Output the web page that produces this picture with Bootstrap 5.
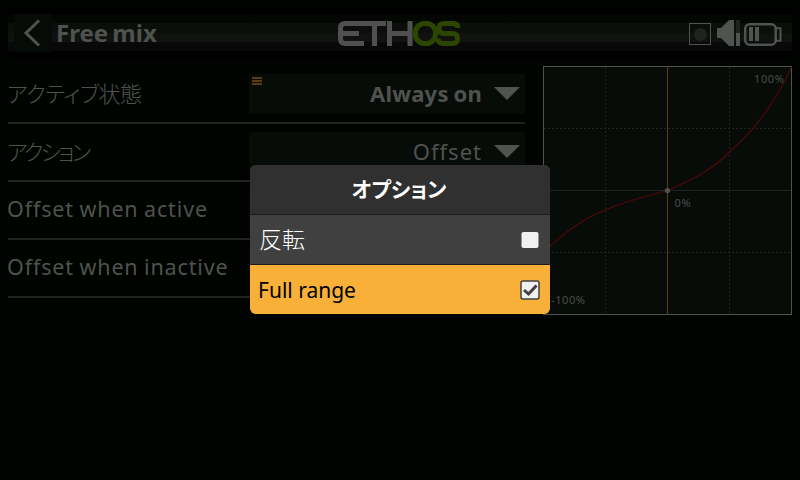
<!DOCTYPE html>
<html lang="ja">
<head>
<meta charset="utf-8">
<meta name="viewport" content="width=device-width, initial-scale=1">
<title>Free mix</title>
<link href="https://cdn.jsdelivr.net/npm/bootstrap@5.3.0/dist/css/bootstrap.min.css" rel="stylesheet">
<style>
body{width:800px;height:480px;background:#000300;color:#4f534f;font-family:"Noto Sans","Noto Sans CJK JP",sans-serif;font-size:21px;line-height:30px}
.topbar{height:50px;margin-top:8px;background:linear-gradient(#000,#000 7px,#040604 7px,#050705 15px,#0b0e0b 15px,#0b0e0b 25px,#101210 25px,#101210 34px,#080908 34px,#080808 43px,#000 43px)}
.back{width:38px;height:38px;margin-left:6px;background:#070b08}
.heading{font-size:24px;font-weight:700;margin-left:4px;width:282px;word-spacing:-2px}
.logo{margin-top:2px}
.status{margin-left:227px;margin-top:1px}
.form-area{width:517px}
.setting{height:58px;padding:8px 0;border-bottom:2px solid #202420}
.setting .caption{letter-spacing:.87px;word-spacing:-1px;font-size:21.5px;width:241px;margin-left:-1px;padding-bottom:2px}
.setting .jp{font-family:"Noto Sans CJK JP",sans-serif;font-weight:300;font-size:22px;letter-spacing:-.5px;word-spacing:0;font-feature-settings:"palt";padding-bottom:5px}
.setting .tight{letter-spacing:-2.8px}
.field{width:276px;height:40px;margin-left:auto;background:#080c09;letter-spacing:1px;padding:0 5px 2px 0}
.field .strong{font-weight:700;font-size:22px;letter-spacing:.2px;word-spacing:-1px}
.field .value{font-size:22px}
.mark3{left:3px;top:3px}
.chart{margin-left:18px}
.chart text{font-size:11px;letter-spacing:.6px;fill:#4a4e4a}
.options{left:250px;top:165px;width:300px;height:149px;border-radius:6px;background:#404040;color:#fff}
.options-title{height:50px;padding:0 2px 4px 0;background:#303030;border-bottom:1px solid #1c1c1c;font-family:"Noto Sans CJK JP",sans-serif;font-weight:700;font-size:21px;font-feature-settings:"palt"}
.option{height:50px;padding:0 10px 0 8px}
.option.plain{border-bottom:1px solid #1c1c1c;font-family:"Noto Sans CJK JP",sans-serif;font-weight:300;font-size:23px;padding-left:9px}
.plain span{padding-bottom:4px}
.option.chosen{height:49px;background:#f8b038;color:#000}
</style>
<script src="https://cdn.jsdelivr.net/npm/bootstrap@5.3.0/dist/js/bootstrap.bundle.min.js"></script>
</head>
<body class="overflow-hidden position-relative d-flex flex-column">
<header class="topbar mx-2 d-flex align-items-center flex-shrink-0">
  <div class="back"><svg class="d-block" width="38" height="38"><path d="M25 6.500L12 19L25 31.500" fill="none" stroke="#505450" stroke-width="3"/></svg></div>
  <div class="heading text-nowrap">Free mix</div>
  <svg class="logo" width="124" height="26" fill="none" stroke-width="5" aria-label="ETHOS">
    <g stroke="#505050"><path d="M48 2.500H7Q2.500 2.500 2.500 7V18Q2.500 22.500 7 22.500H26M2.500 12.500H21M36.500 2.500V25M51.500 0V25M72 0V25M51.500 12.500H72"/></g>
    <g stroke="#2c4600"><rect x="77.500" y="2.500" width="20" height="20" rx="9"/><path d="M120 7Q120 2.500 115 2.500H106Q101 2.500 101 7.500Q101 12.500 106 12.500H114.500Q119.500 12.500 119.500 17.500Q119.500 22.500 114.500 22.500H105Q100 22.500 100 17.500"/></g>
  </svg>
  <svg class="status" width="94" height="28">
    <rect x=".5" y="3.500" width="21" height="21" fill="none" stroke="#505450"/><circle cx="11.500" cy="14.500" r="6.500" fill="#202420"/>
    <path d="M28 8H32L40 0H45V26H40L32 18H28Z" fill="#505450"/>
    <path d="M47 0H51V13H47Z" fill="#202420"/><path d="M47 13H51V26H47Z" fill="#505450"/>
    <rect x="56.200" y="4.200" width="30.500" height="20.500" rx="4.500" fill="none" stroke="#505450" stroke-width="2.500"/><path d="M87 8.200H91.500V20.800H87" fill="none" stroke="#505450" stroke-width="2"/>
    <path d="M60 7H64V21H60ZM66 7H70V21H66Z" fill="#505450"/>
  </svg>
</header>
<main class="d-flex mx-2 pt-2">
  <section class="form-area flex-shrink-0">
    <div class="setting d-flex align-items-center"><div class="caption jp">アクティブ状態</div>
      <div class="field position-relative d-flex align-items-center justify-content-end">
        <svg class="mark3 position-absolute" width="10" height="8"><path d="M0 1H10M0 4H10M0 7H10" stroke="#5d3d10" stroke-width="2"/></svg>
        <span class="strong me-2">Always on</span><svg class="ms-1" width="26" height="13"><path d="M0 0H26L13 13Z" fill="#505450"/></svg></div></div>
    <div class="setting d-flex align-items-center"><div class="caption jp tight">アクション</div>
      <div class="field d-flex align-items-center justify-content-end"><span class="value me-2">Offset</span><svg class="ms-1" width="26" height="13"><path d="M0 0H26L13 13Z" fill="#505450"/></svg></div></div>
    <div class="setting d-flex align-items-center"><div class="caption text-nowrap">Offset when active</div><div class="field"></div></div>
    <div class="setting d-flex align-items-center"><div class="caption text-nowrap">Offset when inactive</div><div class="field"></div></div>
  </section>
  <svg class="chart flex-shrink-0" width="249" height="249">
    <rect x=".5" y=".5" width="248" height="248" fill="#080c09" stroke="#505450"/>
    <path d="M62.500 1V248M186.500 1V248M1 62.500H248M1 186.500H248" stroke="#202420" stroke-dasharray="2 2"/>
    <path d="M1 124.500H248" stroke="#202420"/><path d="M124.500 0V249" stroke="#5d3d10"/>
    <path d="M1 186C18 169 40 153 62.500 144C85 134 105 130 124.500 124.500C145 115 166 107 186.500 86C212 64 233 35 248.500 1" fill="none" stroke="#500808" stroke-width="1.200"/>
    <circle cx="124.500" cy="124.500" r="2.600" fill="#505450"/>
    <text x="211" y="17">100%</text><text x="131.500" y="141">0%</text><text x="8" y="238">-100%</text>
  </svg>
</main>
<div class="options position-absolute overflow-hidden">
  <div class="options-title d-flex align-items-center justify-content-center">オプション</div>
  <div class="option plain d-flex align-items-center justify-content-between"><span>反転</span><svg width="20" height="20"><rect x="1.500" y="2" width="17" height="16" rx="2" fill="#f0f0f0"/></svg></div>
  <div class="option chosen d-flex align-items-center justify-content-between"><span>Full range</span><svg width="20" height="20"><rect x="1" y="1" width="18" height="18" rx="2" fill="#f0f0f0" stroke="#404040" stroke-width="1.500"/><path d="M4 10L8.500 14L16.500 5.500" fill="none" stroke="#404040" stroke-width="3"/></svg></div>
</div>
</body>
</html>
